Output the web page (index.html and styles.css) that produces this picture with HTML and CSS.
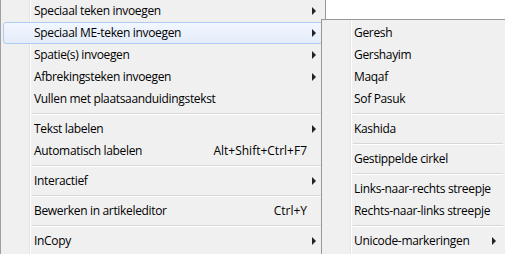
FILE: index.html
```html
<!DOCTYPE html>
<html>
<head>
<meta charset="utf-8">
<link rel="stylesheet" href="styles.css">
</head>
<body>
<div class="screen">
  <div class="menu main">
    <div class="item"><span class="label">Speciaal teken invoegen</span><span class="key"></span><span class="sub-cell"><i class="arrow"></i></span></div>
    <div class="item hot"><span class="label">Speciaal ME-teken invoegen</span><span class="key"></span><span class="sub-cell"><i class="arrow"></i></span></div>
    <div class="item"><span class="label">Spatie(s) invoegen</span><span class="key"></span><span class="sub-cell"><i class="arrow"></i></span></div>
    <div class="item"><span class="label">Afbrekingsteken invoegen</span><span class="key"></span><span class="sub-cell"><i class="arrow"></i></span></div>
    <div class="item"><span class="label">Vullen met plaatsaanduidingstekst</span><span class="key"></span><span class="sub-cell"></span></div>
    <div class="sep"></div>
    <div class="item"><span class="label">Tekst labelen</span><span class="key"></span><span class="sub-cell"><i class="arrow"></i></span></div>
    <div class="item"><span class="label">Automatisch labelen</span><span class="key">Alt+Shift+Ctrl+F7</span><span class="sub-cell"></span></div>
    <div class="sep"></div>
    <div class="item"><span class="label">Interactief</span><span class="key"></span><span class="sub-cell"><i class="arrow"></i></span></div>
    <div class="sep"></div>
    <div class="item"><span class="label">Bewerken in artikeleditor</span><span class="key">Ctrl+Y</span><span class="sub-cell"></span></div>
    <div class="sep"></div>
    <div class="item"><span class="label">InCopy</span><span class="key"></span><span class="sub-cell"><i class="arrow"></i></span></div>
  </div>
  <div class="menu submenu">
    <div class="item"><span class="label">Geresh</span><span class="key"></span><span class="sub-cell"></span></div>
    <div class="item"><span class="label">Gershayim</span><span class="key"></span><span class="sub-cell"></span></div>
    <div class="item"><span class="label">Maqaf</span><span class="key"></span><span class="sub-cell"></span></div>
    <div class="item"><span class="label">Sof Pasuk</span><span class="key"></span><span class="sub-cell"></span></div>
    <div class="sep"></div>
    <div class="item"><span class="label">Kashida</span><span class="key"></span><span class="sub-cell"></span></div>
    <div class="sep"></div>
    <div class="item"><span class="label">Gestippelde cirkel</span><span class="key"></span><span class="sub-cell"></span></div>
    <div class="sep"></div>
    <div class="item"><span class="label">Links-naar-rechts streepje</span><span class="key"></span><span class="sub-cell"></span></div>
    <div class="item"><span class="label">Rechts-naar-links streepje</span><span class="key"></span><span class="sub-cell"></span></div>
    <div class="sep"></div>
    <div class="item"><span class="label">Unicode-markeringen</span><span class="key"></span><span class="sub-cell"><i class="arrow"></i></span></div>
  </div>
</div>
</body>
</html>
```
FILE: styles.css
```css
html, body {
  margin: 0;
  padding: 0;
  background: #ffffff;
}
.screen {
  position: relative;
  width: 505px;
  height: 254px;
  overflow: hidden;
  background: #ffffff;
  font-family: "Open Sans", "Noto Sans", sans-serif;
  font-size: 12px;
  letter-spacing: -0.33px;
  color: #000000;
}
.menu {
  box-sizing: border-box;
  background:
    linear-gradient(to right, transparent 28px, #e2e3e3 28px, #e2e3e3 29px, #ffffff 29px, #ffffff 30px, transparent 30px),
    #f0f0f0;
}
.main {
  width: 326px;
  height: 280px;
  border-left: 1px solid #a0a0a0;
  border-right: 1px solid #979797;
  padding: 0 2px;
}
.submenu {
  position: absolute;
  left: 321px;
  top: 19px;
  width: 185px;
  height: 260px;
  border: 1px solid #979797;
  padding: 2px;
}
.item {
  box-sizing: border-box;
  height: 22px;
  display: grid;
  grid-template-columns: 1fr auto 15px;
  align-items: center;
  padding-left: 30px;
  white-space: nowrap;
  border: 1px solid transparent;
  border-radius: 3px;
}
.submenu .item {
  padding-left: 29px;
}
.item.hot {
  background: linear-gradient(#f2f7fe, #e3ecf9);
  border-color: #aecaf0;
}
.label {
  line-height: 20px;
}
.key {
  line-height: 20px;
  letter-spacing: 0;
}
.sub-cell {
  display: flex;
  align-items: center;
  padding-left: 5px;
}
.arrow {
  display: block;
  width: 0;
  height: 0;
  border-left: 4px solid #222222;
  border-top: 4px solid transparent;
  border-bottom: 4px solid transparent;
}
.sep {
  height: 8px;
  margin-left: 29px;
  display: flex;
  flex-direction: column;
  justify-content: center;
}
.sep::before {
  content: "";
  display: block;
  height: 1px;
  background: #d7d7d7;
}
.sep::after {
  content: "";
  display: block;
  height: 1px;
  background: #ffffff;
}
```
